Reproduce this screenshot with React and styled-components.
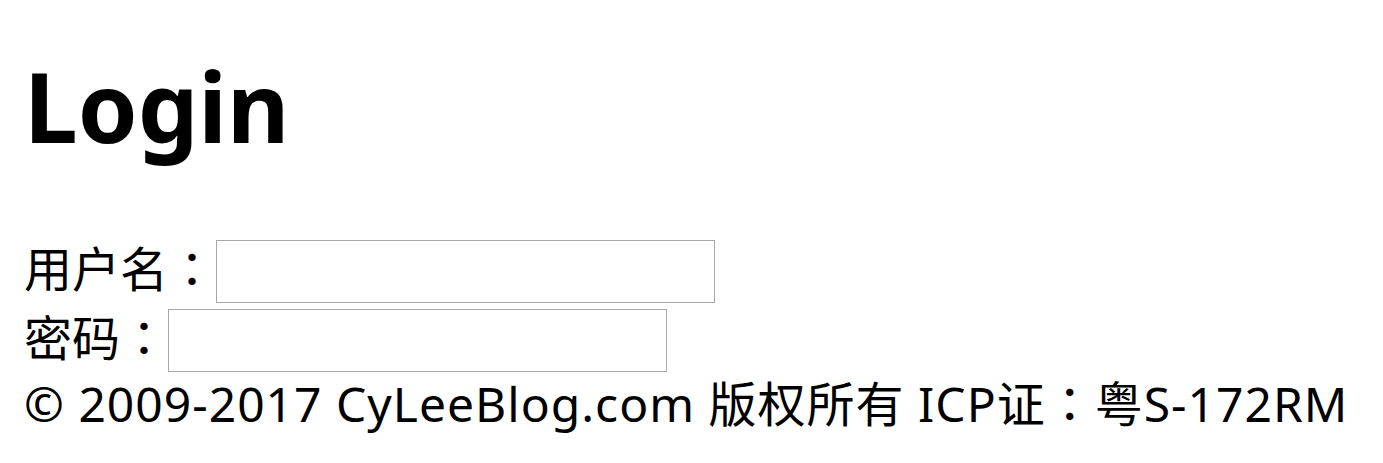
import React from 'react';
import styled, { createGlobalStyle } from 'styled-components';

const GlobalStyle = createGlobalStyle`
  html, body {
    margin: 0;
    padding: 0;
    background: #ffffff;
  }
  body {
    font-family: "Noto Sans", "Noto Sans CJK SC", sans-serif;
    color: #000000;
  }
`;

const Page = styled.div`
  padding: 0 24px;
  font-size: 48px;
`;

const Title = styled.h1`
  margin: 0;
  padding-top: 46px;
  height: 237px;
  box-sizing: border-box;
  font-size: 96px;
  font-weight: 700;
  line-height: 120px;
`;

const Row = styled.div`
  display: flex;
  align-items: center;
  height: 69px;
`;

const Label = styled.span`
  font-family: "Noto Sans CJK SC", sans-serif;
  font-size: 48px;
  line-height: 1;
  padding-bottom: 12px;
`;

// full-width colon drawn centred in its em box, as in the reference
const Colon = styled.span`
  font-family: "Noto Sans CJK TC", sans-serif;
`;

const Input = styled.input`
  box-sizing: border-box;
  width: 499px;
  height: 63px;
  margin: 0;
  padding: 0 6px;
  border: 1px solid #a9a9a9;
  background: #ffffff;
  font-size: 40px;
  outline: none;
`;

const Footer = styled.div`
  height: 69px;
  box-sizing: border-box;
  padding-bottom: 18px;
  display: flex;
  align-items: center;
  white-space: nowrap;
  font-size: 48px;
  letter-spacing: 1px;
`;

export default function App() {
  return (
    <>
      <GlobalStyle />
      <Page>
        <Title>Login</Title>
        <Row>
          <Label>用户名<Colon>：</Colon></Label>
          <Input type="text" />
        </Row>
        <Row>
          <Label>密码<Colon>：</Colon></Label>
          <Input type="password" />
        </Row>
        <Footer>
          © 2009-2017 CyLeeBlog.com 版权所有 ICP证<Colon>：</Colon>粤S-172RM
        </Footer>
      </Page>
    </>
  );
}
